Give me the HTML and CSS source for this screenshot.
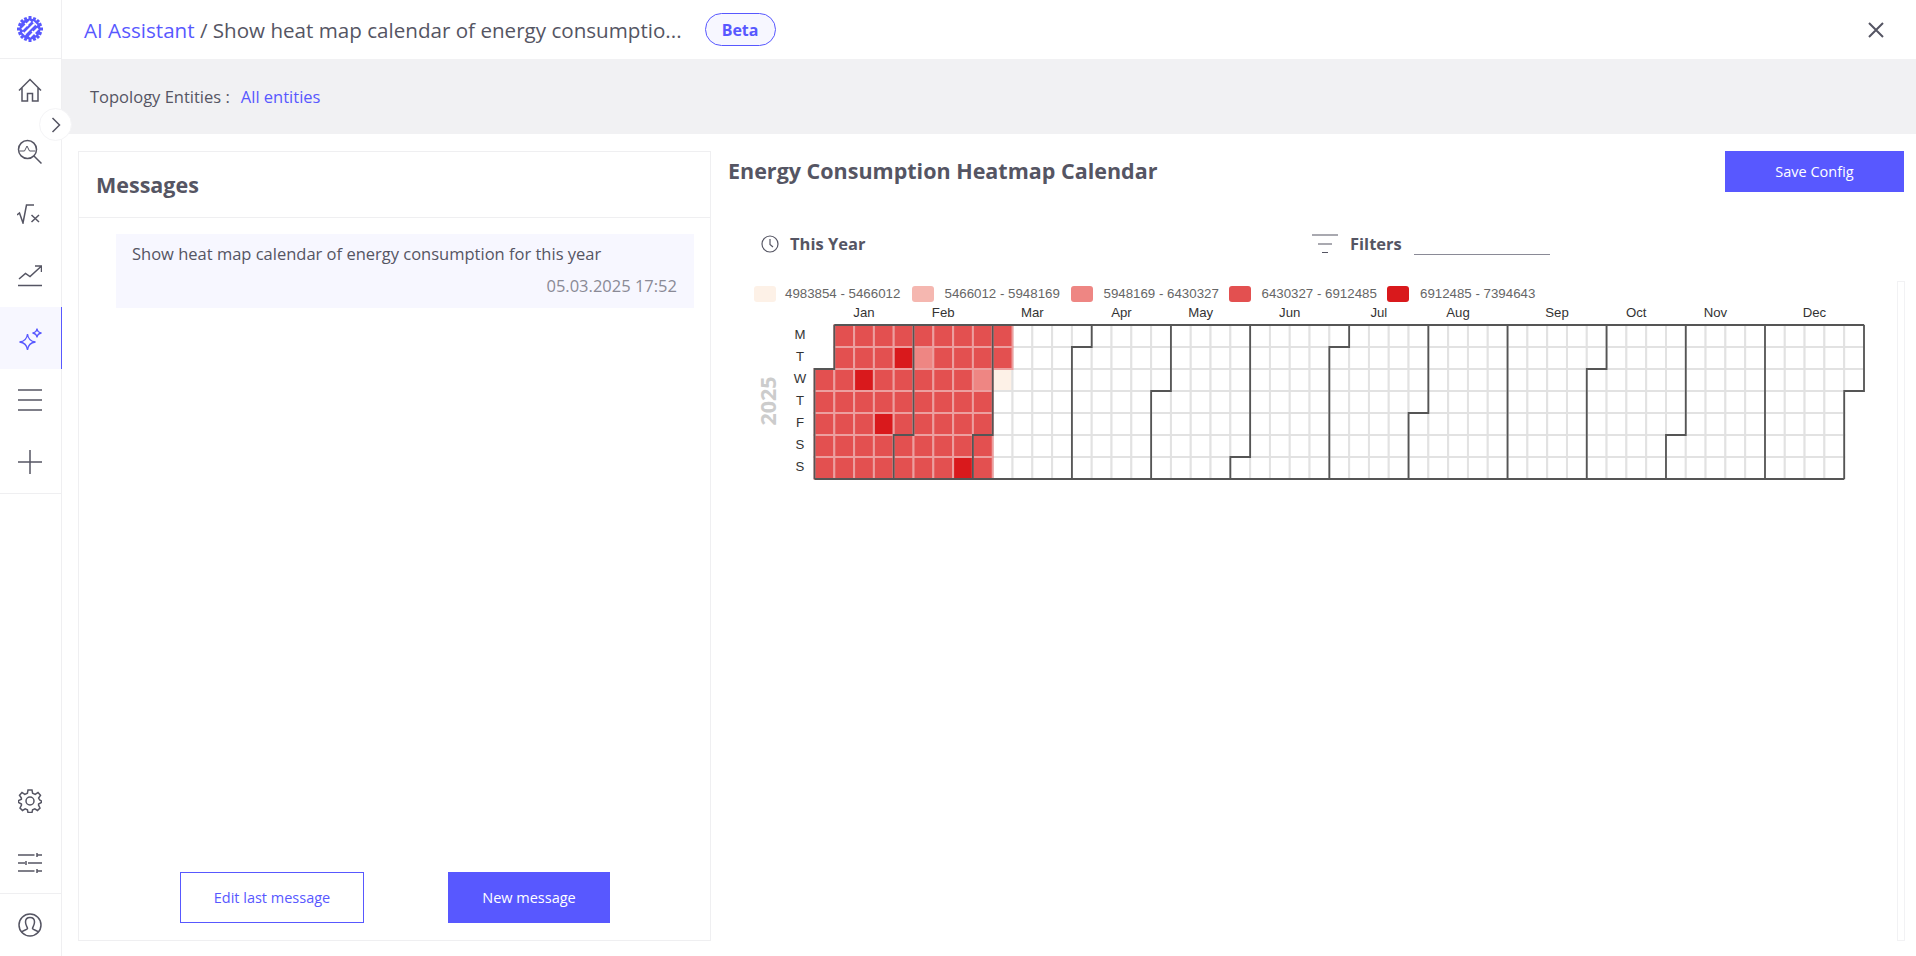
FILE: index.html
```html
<!DOCTYPE html>
<html lang="en">
<head>
<meta charset="utf-8">
<title>AI Assistant</title>
<link rel="stylesheet" href="styles.css">
</head>
<body>
<div class="app">
  <aside class="sidebar">
    <div class="side-logo">
      <svg class="logo" viewBox="0 0 26 26" width="26" height="26">
        <circle cx="13" cy="13" r="10.500" fill="#5858ff"/>
        <path class="logo-teeth" d="M13 0V26M0 13H26M4 4L22 22M22 4L4 22M8 1.500L18 24.500M18 1.500L8 24.500M1.500 8L24.500 18M1.500 18L24.500 8"/>
        <circle cx="13" cy="13" r="9" fill="#5858ff"/>
        <path class="logo-slash" d="M5 13.500L13.500 5M8 17.500L17.500 8M12.500 21L21 12.500"/>
        <path class="logo-slash-thin" d="M8 7L11 10M15 15L19 19M5.500 16L8.500 19M16 5.500L20 9.500"/>
      </svg>
    </div>
    <nav class="side-nav">
      <div class="side-item">
        <svg viewBox="0 0 24 24" width="24" height="24" class="ico"><path d="M1 12.500L12 1.500L23 12.500M4 10V23H9.500V15.500H14.500V23H20V10"/></svg>
      </div>
      <div class="side-item">
        <svg viewBox="0 0 26 26" width="26" height="26" class="ico"><circle cx="10.500" cy="10.500" r="9"/><path d="M17 17L24.500 24.500"/><path class="ico-fine" d="M2.500 12H7.500L10 7L12.500 12H18"/></svg>
      </div>
      <div class="side-item">
        <svg viewBox="1 0 25 20" width="25" height="20" class="ico"><path d="M1 11L3.500 9L7 19L10.500 1H18"/><path d="M15.500 11L23 18M23 11L15.500 18"/></svg>
      </div>
      <div class="side-item">
        <svg viewBox="0 0 24 22" width="24" height="22" class="ico"><path d="M1 14L7.500 8.500L12 11.500L23 1.500M17 1H23.500V7M0 20.500H24"/></svg>
      </div>
      <div class="side-item side-active">
        <svg viewBox="0 0 24 24" width="24" height="24" class="ico-active"><path d="M9.500 8C10 12.500 12.500 15.500 17.500 16C12.500 16.500 10 19.500 9.500 24C9 19.500 6.500 16.500 1.500 16C6.500 15.500 9 12.500 9.500 8Z"/><path d="M19 2.500C19.300 5 20.700 6.700 23.500 7C20.700 7.300 19.300 9 19 11.500C18.700 9 17.300 7.300 14.500 7C17.300 6.700 18.700 5 19 2.500Z"/></svg>
      </div>
      <div class="side-item">
        <svg viewBox="0 0 24 22" width="24" height="22" class="ico"><path d="M0 1H24M0 11H24M0 21H24"/></svg>
      </div>
      <div class="side-item side-last">
        <svg viewBox="0 0 24 24" width="24" height="24" class="ico"><path d="M0 12H24M12 0V24"/></svg>
      </div>
    </nav>
    <div class="side-bottom">
      <div class="side-item">
        <svg viewBox="0 0 24 24" width="24" height="24" class="ico"><circle cx="12" cy="12" r="4"/><path d="M10 1H14L14.600 4.300L17.200 5.400L20 3.500L22.500 6.300L20.600 9L21.700 11L23.500 12L23.500 13.500L20.600 15L20.500 16L22 19L19.500 21.500L16.800 19.800L14.600 20.800L14 23.500H10L9.400 20.800L7.200 19.800L4.500 21.500L2 19L3.500 16L3.400 15L.5 13.500V11.500L3.400 10.200L3.400 9L1.500 6.300L4 3.500L6.800 5.400L9.400 4.300Z"/></svg>
      </div>
      <div class="side-item side-sliders">
        <svg viewBox="0 0 24 20" width="24" height="20" class="ico"><path d="M0 2H16.500M19 2H24M19 0V4M0 10H7M10 10H24M8 8V12M0 18H16.500M19 18H24M19 16V20"/></svg>
      </div>
      <div class="side-item">
        <svg viewBox="0 0 24 24" width="24" height="24" class="ico"><circle cx="12" cy="12" r="11"/><path d="M3.500 19.500C5 17 9 17 9.500 15.500C9.500 14 7.500 12.500 7.500 9C7.500 6 9.500 4.500 12 4.500C14.500 4.500 16.500 6 16.500 9C16.500 12.500 14.500 14 14.500 15.500C15 17 19 17 20.500 19.500"/></svg>
      </div>
    </div>
    <button class="collapse" type="button" aria-label="Expand">
      <svg viewBox="0 0 10 16" width="10" height="16" class="ico"><path d="M1.500 1L8.500 8L1.500 15"/></svg>
    </button>
  </aside>
  <main class="main">
    <header class="topbar">
      <div class="crumb"><span class="crumb-link">AI Assistant</span> / Show heat map calendar of energy consumptio...</div>
      <span class="beta">Beta</span>
      <svg class="close" viewBox="0 0 16 16" width="16" height="16"><path d="M1 1L15 15M15 1L1 15"/></svg>
    </header>
    <div class="band">
      <span class="band-label">Topology Entities :</span>
      <span class="band-link">All entities</span>
    </div>
    <div class="content">
      <section class="card">
        <h2 class="card-title">Messages</h2>
        <div class="card-body">
          <div class="bubble">
            <div class="bubble-text">Show heat map calendar of energy consumption for this year</div>
            <div class="bubble-time">05.03.2025 17:52</div>
          </div>
        </div>
        <div class="card-actions">
          <button class="btn btn-outline" type="button">Edit last message</button>
          <button class="btn btn-solid btn-new" type="button">New message</button>
        </div>
      </section>
      <section class="panel">
        <div class="panel-head">
          <h1 class="panel-title">Energy Consumption Heatmap Calendar</h1>
          <button class="btn btn-solid btn-save" type="button">Save Config</button>
        </div>
        <div class="controls">
          <div class="control control-time">
            <svg viewBox="0 0 18 18" width="18" height="18" class="ico-thin"><circle cx="9" cy="9" r="8"/><path d="M9 4V9.500L12 12"/></svg>
            <span>This Year</span>
          </div>
          <div class="control control-filter">
            <svg viewBox="0 0 26 20" width="26" height="20" class="ico-thin"><path d="M0 1H26M6 10H20M10 18.500H16"/></svg>
            <span>Filters</span>
            <div class="filter-input"></div>
          </div>
        </div>
        <div class="chart-row">
          <div id="chart" class="chart"></div>
          <div class="track"></div>
        </div>
      </section>
    </div>
  </main>
</div>
<script src="script.js"></script>
</body>
</html>
```
FILE: styles.css
```css
* { box-sizing: border-box; }
html, body { margin: 0; height: 100%; }
body {
  font-family: "Open Sans", "Liberation Sans", sans-serif;
  color: #555563;
  background: #fff;
  overflow: hidden;
}
.app { display: flex; width: 1916px; height: 956px; }
.sidebar {
  position: relative;
  flex: 0 0 62px;
  display: flex;
  flex-direction: column;
  border-right: 1px solid #efeff1;
}
.side-logo {
  height: 59px;
  display: flex;
  align-items: center;
  justify-content: center;
  padding-right: 2px;
  border-bottom: 1px solid #efeff1;
}
.logo-teeth { fill: none; stroke: #5858ff; stroke-width: 3; }
.logo-slash { fill: none; stroke: #fff; stroke-width: 2.200; }
.logo-slash-thin { fill: none; stroke: #fff; stroke-width: 1.500; }
.side-nav { display: flex; flex-direction: column; border-bottom: 1px solid #efeff1; }
.side-item {
  height: 62px;
  display: flex;
  align-items: center;
  justify-content: center;
  padding-right: 2px;
}
.side-active { background: #f7f7ff; border-right: 1px solid #5858ff; margin-right: -1px; padding-right: 2px; }
.side-bottom { margin-top: auto; display: flex; flex-direction: column; }
.side-sliders { border-bottom: 1px solid #efeff1; }
.ico, .ico-thin, .ico-active, .close { fill: none; stroke: #555563; stroke-width: 1.500; }
.ico-fine { stroke-width: 1; }
.ico-thin { stroke-width: 1.200; }
.ico-active { stroke: #5858ff; stroke-width: 1.300; }
.close { stroke-width: 2; margin-left: auto; }
.collapse {
  position: absolute;
  left: 39px;
  top: 108px;
  width: 33px;
  height: 33px;
  padding: 0 0 0 1px;
  border: 1px solid #f4f4f6;
  border-radius: 50%;
  background: #fff;
  display: flex;
  align-items: center;
  justify-content: center;
}
.main { flex: 1; min-width: 0; display: flex; flex-direction: column; }
.topbar {
  height: 59px;
  flex: none;
  display: flex;
  align-items: center;
  padding: 0 32px 0 22px;
}
.crumb { font-size: 20.600px; white-space: nowrap; }
.crumb-link, .band-link { color: #5858ff; }
.beta {
  margin-left: 23px;
  width: 71px;
  height: 33px;
  border: 1px solid #5858ff;
  border-radius: 17px;
  background: #f7f7ff;
  color: #5858ff;
  display: flex;
  align-items: center;
  justify-content: center;
  font-size: 16px;
  font-weight: 700;
}
.band {
  height: 75px;
  flex: none;
  background: #f1f1f3;
  display: flex;
  align-items: center;
  padding: 0 0 0 28px;
  font-size: 16.500px;
}
.band-link { margin-left: 11px; }
.content { flex: 1; min-height: 0; display: flex; padding: 17px 12px 15px 16px; }
.card {
  flex: 0 0 633px;
  border: 1px solid #efeff1;
  display: flex;
  flex-direction: column;
}
.card-title {
  margin: 0;
  height: 66px;
  flex: none;
  display: flex;
  align-items: center;
  padding-left: 17px;
  font-size: 21.500px;
  font-weight: 700;
  border-bottom: 1px solid #efeff1;
}
.card-body { flex: 1; padding: 16px 16px 0 37px; }
.bubble { background: #f7f7ff; height: 74px; padding: 9px 17px 0 16px; }
.bubble-text { font-size: 16.500px; line-height: 22px; }
.bubble-time { font-size: 16.500px; line-height: 22px; color: #8a8a96; text-align: right; margin-top: 10px; }
.card-actions { display: flex; padding: 0 0 17px 101px; }
.btn {
  font-family: inherit;
  font-size: 14.500px;
  padding: 0;
  height: 51px;
}
.btn-outline { width: 184px; background: #fff; border: 1px solid #5858ff; color: #5858ff; }
.btn-solid { background: #5858ff; border: 0; color: #fff; }
.btn-new { width: 162px; margin-left: 84px; }
.panel { flex: 1; min-width: 0; display: flex; flex-direction: column; padding-left: 17px; }
.panel-head { display: flex; justify-content: space-between; align-items: flex-start; height: 74px; flex: none; }
.panel-title { margin: 0; font-size: 21.500px; font-weight: 700; line-height: 40px; color: #555563; }
.btn-save { width: 179px; height: 41px; }
.controls { display: flex; height: 37px; flex: none; margin-bottom: 8px; font-size: 16.500px; font-weight: 700; }
.control { display: flex; align-items: center; }
.control-time { margin-left: 33px; width: 551px; gap: 11px; }
.control-filter { gap: 12px; }
.filter-input { width: 136px; height: 20px; border-bottom: 1px solid #8a8a96; margin-top: 3px; }
.chart-row { flex: 1; min-height: 0; display: flex; }
.chart { flex: 0 0 1156px; margin-left: 13px; }
.chart svg { display: block; }
.track { margin-top: 11px; width: 8px; flex: none; height: 660px; border: 1px solid #f2f2f4; margin-left: auto; }
.legend-text { font-family: "Liberation Sans", sans-serif; font-size: 13.300px; fill: #666; }
.axis-text { font-family: "Liberation Sans", sans-serif; font-size: 13.200px; fill: #333; }
.year-text { font-family: "Open Sans", sans-serif; font-size: 21.500px; font-weight: 700; fill: #ccc; }
.day { stroke: #e2e2e2; stroke-width: 2; }
.day-on { stroke: #ec9f9f; stroke-width: 2; }
.grid-line { fill: none; stroke: #555; stroke-width: 1.800; stroke-linejoin: miter; }
```
FILE: script.js
```js
(function () {
  var NS = 'http://www.w3.org/2000/svg';
  var W = 1156, H = 220;
  var X0 = 73.5, Y0 = 55, CW = 1049.5 / 53, CH = 22;
  var COLORS = ['#fdf1e7', '#f5b7b0', '#ee8683', '#e35050', '#d9191c'];
  var LEGEND = [
    ['4983854 - 5466012', 13, 44],
    ['5466012 - 5948169', 171, 203.500],
    ['5948169 - 6430327', 330, 362.500],
    ['6430327 - 6912485', 488, 520.500],
    ['6912485 - 7394643', 646, 679]
  ];
  var MONTHS = ['Jan', 'Feb', 'Mar', 'Apr', 'May', 'Jun', 'Jul', 'Aug', 'Sep', 'Oct', 'Nov', 'Dec'];
  var DAYS = ['M', 'T', 'W', 'T', 'F', 'S', 'S'];
  var svg = document.createElementNS(NS, 'svg');
  svg.setAttribute('width', W);
  svg.setAttribute('height', H);
  svg.setAttribute('viewBox', '0 0 ' + W + ' ' + H);

  function el(name, attrs, text) {
    var n = document.createElementNS(NS, name);
    Object.keys(attrs).forEach(function (k) { n.setAttribute(k, attrs[k]); });
    if (text) n.textContent = text;
    svg.appendChild(n);
    return n;
  }
  function pos(date) {
    var start = Date.UTC(2025, 0, 1);
    var idx = Math.round((date - start) / 864e5) + 2;
    return { c: Math.floor(idx / 7), r: idx % 7 };
  }
  function colorFor(month, day) {
    var key = month + '-' + day;
    if (key === '0-15' || key === '0-24' || key === '0-28' || key === '1-23') return COLORS[4];
    if (key === '1-4' || key === '1-26') return COLORS[2];
    if (key === '2-5') return COLORS[0];
    if (month < 2 || (month === 2 && day <= 4)) return COLORS[3];
    return '#fff';
  }

  LEGEND.forEach(function (l, i) {
    el('rect', { x: l[1], y: 16, width: 22, height: 16, rx: 3, fill: COLORS[i] });
    el('text', { x: l[2], y: 28, 'class': 'legend-text' }, l[0]);
  });

  var plain = [], filled = [];
  for (var t = Date.UTC(2025, 0, 1); t < Date.UTC(2026, 0, 1); t += 864e5) {
    var d = new Date(t);
    var color = colorFor(d.getUTCMonth(), d.getUTCDate());
    (color === '#fff' || color === COLORS[0] ? plain : filled).push({ t: t, color: color });
  }
  plain.concat(filled).forEach(function (cell) {
    var p = pos(cell.t);
    var on = cell.color !== '#fff' && cell.color !== COLORS[0];
    el('rect', {
      x: X0 + p.c * CW, y: Y0 + p.r * CH, width: CW, height: CH,
      fill: cell.color, 'class': on ? 'day-on' : 'day'
    });
  });

  MONTHS.forEach(function (name, m) {
    var first = pos(Date.UTC(2025, m, 1));
    var last = pos(Date.UTC(2025, m + 1, 0));
    var cx = X0 + (first.c + last.c + 1) / 2 * CW;
    el('text', { x: cx, y: 47, 'text-anchor': 'middle', 'class': 'axis-text' }, name);
    var points = [
      [first.c + (first.r ? 1 : 0), 0],
      [first.c + (first.r ? 1 : 0), first.r],
      [first.c, first.r],
      [first.c, 7]
    ];
    var d2 = points.map(function (q) { return (X0 + q[0] * CW) + ' ' + (Y0 + q[1] * CH); }).join(' L');
    el('path', { d: 'M' + d2, 'class': 'grid-line' });
  });
  var end = pos(Date.UTC(2025, 11, 31));
  el('path', {
    d: 'M' + X0 + ' ' + (Y0 + 7 * CH) + ' H' + (X0 + end.c * CW) +
      ' M' + (X0 + (end.c + 1) * CW) + ' ' + Y0 + ' V' + (Y0 + (end.r + 1) * CH) + ' H' + (X0 + end.c * CW) + ' V' + (Y0 + 7 * CH) +
      ' M' + (X0 + CW) + ' ' + Y0 + ' H' + (X0 + (end.c + 1) * CW),
    'class': 'grid-line'
  });

  DAYS.forEach(function (name, r) {
    el('text', { x: 59, y: Y0 + r * CH + 14, 'text-anchor': 'middle', 'class': 'axis-text' }, name);
  });
  var yc = Y0 + 3.5 * CH - 1;
  el('text', { x: 0, y: 0, 'text-anchor': 'middle', transform: 'translate(35 ' + yc + ') rotate(-90)', 'class': 'year-text' }, '2025');

  document.getElementById('chart').appendChild(svg);
})();
```
